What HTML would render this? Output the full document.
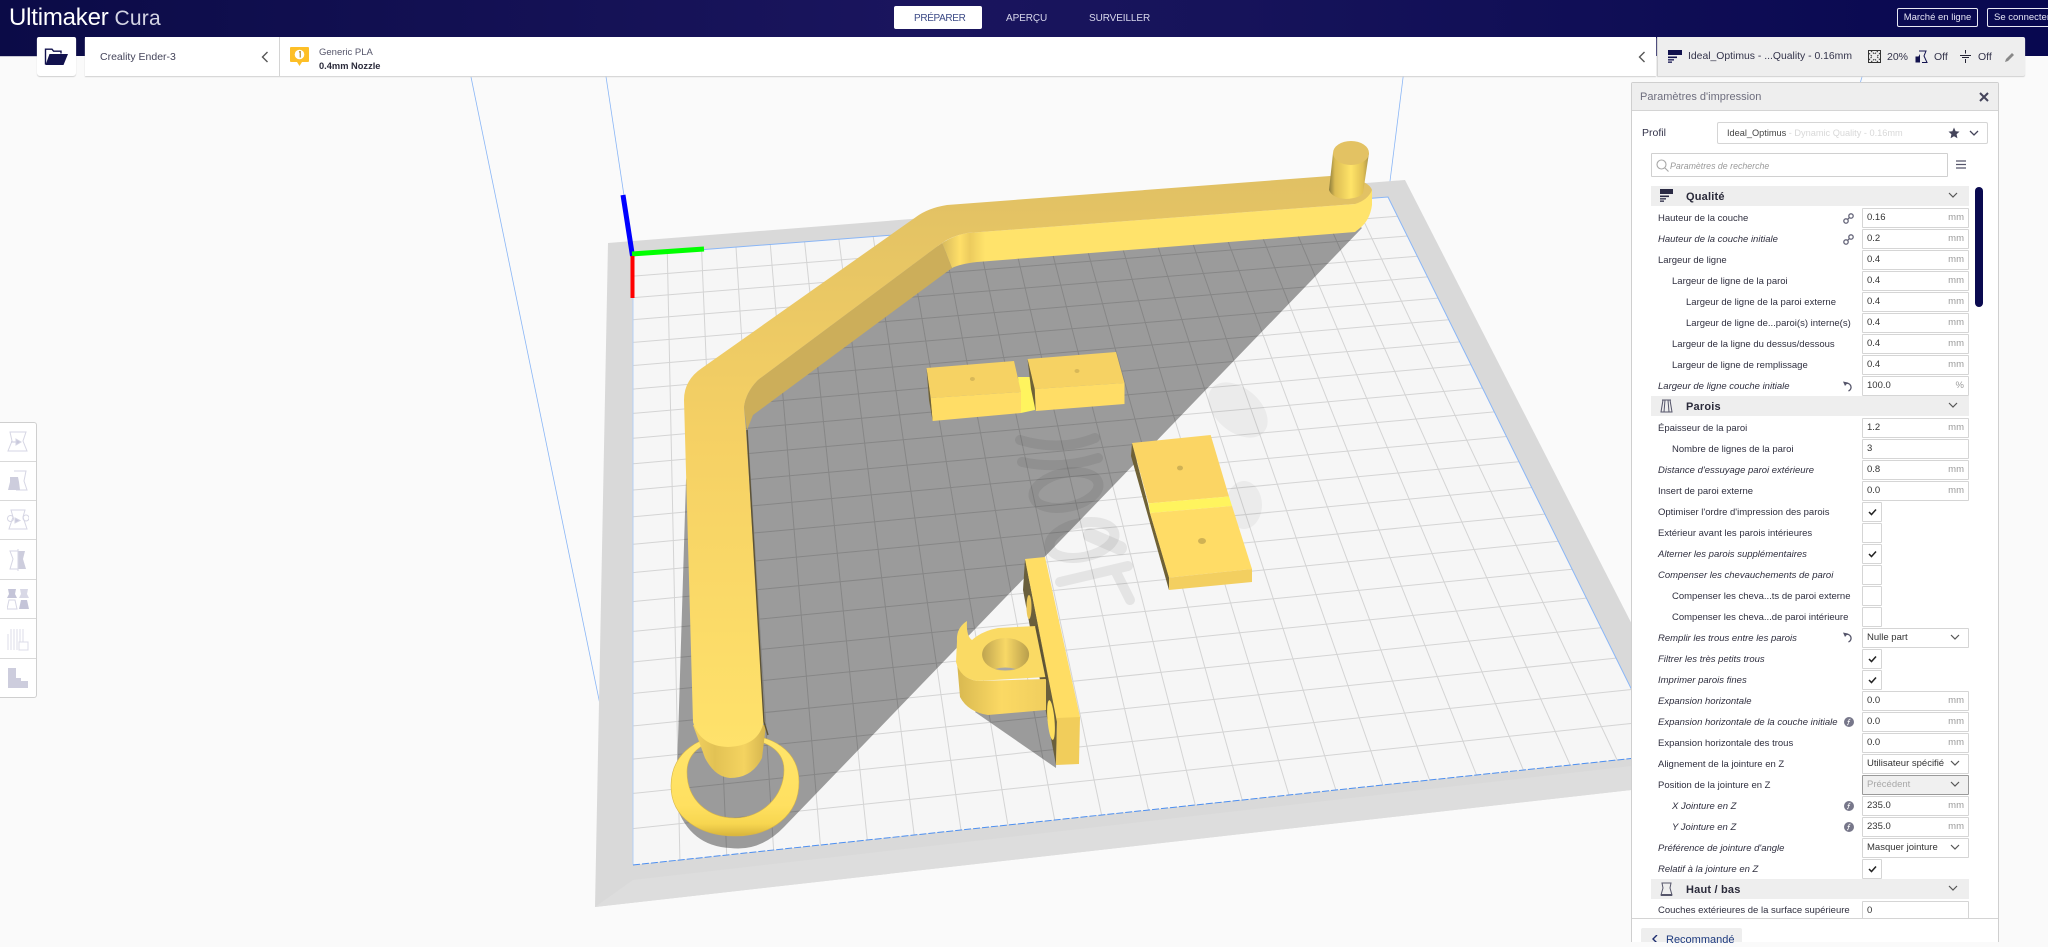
<!DOCTYPE html>
<html lang="fr"><head><meta charset="utf-8"><title>Ultimaker Cura</title>
<style>
html,body{margin:0;padding:0;width:2048px;height:942px;overflow:hidden;background:#fafafa;font-family:"Liberation Sans",sans-serif;color:#2b2b3a}
div,span{box-sizing:border-box}
.a{position:absolute}
.t{position:absolute;white-space:nowrap;line-height:14px;height:14px}
#list{position:absolute;left:0;top:0;width:2048px;height:918px;overflow:hidden}
.l{position:absolute;white-space:nowrap;font-size:9.5px;line-height:14px;color:#2f2f3f;margin-top:1px}
.i{font-style:italic}
.b{position:absolute;left:1862px;width:107px;height:20px;border:1px solid #d5d5d5;background:#fff;border-radius:1px;font-size:9.5px;line-height:18px;padding-left:4px;color:#333;white-space:nowrap}
.b u{position:absolute;right:4px;top:0;text-decoration:none;color:#9a9a9a}
.b svg{position:absolute;left:87px;top:5px}
.c{position:absolute;left:1862px;width:20px;height:20px;border:1px solid #d5d5d5;background:#fff;border-radius:1px}
.c svg{position:absolute;left:5px;top:5px}
.h{position:absolute;left:1651px;width:318px;height:20px;background:#eeeeee}
.h b{position:absolute;left:35px;top:4px;font-size:11px;line-height:14px;color:#2a2a3a;letter-spacing:.2px}
.h svg.ic{position:absolute;left:9px;top:3px}
.h svg.ch{position:absolute;left:297px;top:6px}
.tb{position:absolute;left:0;width:36px;height:39px;border-bottom:1px solid #d9d9d9}
.tb svg{position:absolute;left:7px;top:8px}
</style></head><body>

<svg class="a" style="left:0;top:0" width="2048" height="942" viewBox="0 0 2048 942">
<defs>
<linearGradient id="top" gradientUnits="userSpaceOnUse" x1="0" y1="170" x2="0" y2="750"><stop offset="0" stop-color="#e0c064"/><stop offset=".45" stop-color="#f5d064"/><stop offset="1" stop-color="#ffe26b"/></linearGradient>
<linearGradient id="peg" x1="0" x2="1" y1="0" y2="0"><stop offset="0" stop-color="#8c7c3c"/><stop offset=".15" stop-color="#dcbc54"/><stop offset=".55" stop-color="#ffe468"/><stop offset=".85" stop-color="#e0c054"/><stop offset="1" stop-color="#a8924a"/></linearGradient>
<linearGradient id="cyl" x1="0" x2="1" y1="0" y2="0"><stop offset="0" stop-color="#f2d060"/><stop offset=".3" stop-color="#e2c254"/><stop offset=".7" stop-color="#f4d360"/><stop offset="1" stop-color="#d4b44e"/></linearGradient>
<linearGradient id="ring" x1="0" x2="0" y1="0" y2="1"><stop offset="0" stop-color="#ffe56c"/><stop offset=".7" stop-color="#ffe060"/><stop offset=".88" stop-color="#f7d650"/><stop offset="1" stop-color="#d8b43c"/></linearGradient>
<linearGradient id="hole" x1="0" x2="1" y1="0" y2="0"><stop offset="0" stop-color="#bfa450"/><stop offset=".5" stop-color="#f8d866"/><stop offset="1" stop-color="#b89e4c"/></linearGradient>
<linearGradient id="cv" x1="0" x2="1" y1="0" y2="0"><stop offset="0" stop-color="#d8b850"/><stop offset=".5" stop-color="#fbd964"/><stop offset="1" stop-color="#f0ce5e"/></linearGradient>
<linearGradient id="bend" gradientUnits="userSpaceOnUse" x1="935" y1="0" x2="985" y2="0"><stop offset="0" stop-color="#c8ab58"/><stop offset=".5" stop-color="#ffdf68"/><stop offset=".7" stop-color="#eccb5e"/><stop offset="1" stop-color="#ffe36b"/></linearGradient>
</defs>

<!-- build volume back lines -->
<g stroke="#8ab6f6" stroke-width=".8" fill="none">
<path d="M605 70L633 255"/><path d="M1404 70L1388 197"/><path d="M471 77L633 865"/><path d="M1864 70L1664 755"/>
</g>

<!-- plate -->
<polygon points="608,243 1405,180 1640,640 1640,789 595,907" fill="#d9d9d9"/>
<polygon points="595,907 633,880 1640,765 1640,789" fill="#dddddd"/>
<polygon points="633,255 1388,197 1664,755 633,865" fill="#f6f6f6"/>

<!-- grid -->
<g stroke="#d4d4d4" stroke-width="1" fill="none">
<path d="M633 276.1L1397.5 216.3M633 297.6L1407.3 236M633 319.7L1417.3 256.2M633 342.4L1427.5 276.9M633 365.5L1438 298.1M633 389.1L1448.7 319.7M633 413.4L1459.7 341.9M633 438.3L1470.9 364.7M633 463.8L1482.5 388M633 490L1494.3 411.9M633 516.8L1506.5 436.5M633 544.3L1518.9 461.7M633 572.6L1531.7 487.5M633 601.6L1544.8 514.1M633 631.4L1558.3 541.3M633 662L1572.1 569.3M633 693.5L1586.4 598.1M633 725.9L1601 627.7M633 759.1L1616.1 658.1M633 793.4L1631.6 689.5M633 828.6L1647.6 721.7"/>
<path d="M667.3 252.4L679.9 860M701.6 249.7L726.7 855M736 247.1L773.6 850M770.3 244.5L820.4 845M804.6 241.8L867.3 840M838.9 239.2L914.2 835M873.2 236.5L961 830M907.6 233.9L1007.9 825M941.9 231.3L1054.7 820M976.2 228.6L1101.6 815M1010.5 226L1148.5 810M1044.8 223.4L1195.3 805M1079.2 220.7L1242.2 800M1113.5 218.1L1289 795M1147.8 215.5L1335.9 790M1182.1 212.8L1382.8 785M1216.4 210.2L1429.6 780M1250.8 207.6L1476.5 775M1285.1 204.9L1523.4 770M1319.4 202.3L1570.2 765M1353.7 199.6L1617.1 760"/>
</g>
<!-- plate edges -->
<g fill="none" stroke-width="1">
<path d="M633 255L1388 197L1664 755" stroke="#8ab6f6"/>
<path d="M633 255L633 865" stroke="#b4d0f6"/>
<path d="M633 865L1664 755" stroke="#4d8ff0" stroke-dasharray="7 2"/>
</g>

<!-- faint lettering footprint -->
<g fill="none" stroke="#333" stroke-opacity=".09" stroke-linecap="round">
<path d="M1020 440Q1060 452 1095 438M1022 462Q1060 470 1098 458" stroke-width="10"/>
<ellipse cx="1066" cy="490" rx="33" ry="17" stroke-width="10" transform="rotate(-12 1066 490)"/>
<ellipse cx="1082" cy="540" rx="33" ry="17" stroke-width="10" transform="rotate(-12 1082 540)"/>
<path d="M1060 582L1128 566M1116 572Q1124 588 1130 600" stroke-width="10"/>
<path d="M1090 535L1120 548" stroke-width="14"/>
</g>
<g fill="#444" fill-opacity=".06">
<ellipse cx="1238" cy="410" rx="34" ry="22" transform="rotate(40 1238 410)"/>
<ellipse cx="1244" cy="505" rx="18" ry="24"/>
</g>

<!-- shadow -->
<path d="M1362 228L784 827Q760 852 730 848Q690 846 676 805L686 480L704 400L800 315L950 240L1340 210Z" fill="#000" fill-opacity=".37"/>
<polygon points="975,712 1056,768 1058,700 1000,690" fill="#000" fill-opacity=".37"/>

<!-- ring -->
<path fill-rule="evenodd" d="M671 786C671 752 700 734 735 734C772 734 799 750 799 782C799 815 772 836 735 836C700 836 671 818 671 786ZM687 772C687 800 708 818 735 818C762 818 784 796 784 770C784 748 762 738 735 738C708 738 687 750 687 772Z" fill="url(#ring)" stroke="#d8b648" stroke-width=".6"/>

<!-- arm cylinder end -->
<path d="M693 725L705 758Q715 777 730 778Q752 778 762 758L766 725Z" fill="url(#cyl)"/>

<!-- arm horizontal wall -->
<path d="M942 243Q955 235 967 233L1355 204Q1365 200 1372 190L1372 205Q1370 220 1360 228L1355 232L977 262Q960 264 952 268Z" fill="url(#bend)"/>
<!-- arm diagonal wall -->
<path d="M758 380L942 243L952 268L753 415L747 430L744 407Q746 392 758 380Z" fill="#ccae5a"/>
<!-- arm top surface -->
<path d="M1372 190Q1368 178 1330 176L947 205Q928 208 916 217L702 368Q684 380 684 400L693 722Q700 746 728 747Q760 746 764 720L746 430L744 407Q746 392 758 380L942 243Q952 236 967 233L1355 204Q1368 200 1372 190Z" fill="url(#top)"/>
<path d="M747 430L764 722L768 735" stroke="#5c5236" stroke-width="1.4" fill="none"/>

<!-- peg -->
<path d="M1333 153L1329 190Q1332 198 1346 199Q1360 198 1363 193L1369 153Z" fill="url(#peg)"/>
<ellipse cx="1351" cy="153" rx="18" ry="12" fill="#e3c263"/>

<!-- block A -->
<polygon points="1018,377 1033,377 1035,410 1021,413" fill="#fff45e"/>
<polygon points="926.5,368 1014,361 1021,392 930.6,398" fill="#f6d263"/>
<polygon points="930.6,398 1021,392 1021,413 932.6,421" fill="#ffdd66"/>
<polygon points="926.5,368 930.6,398 932.6,421 929,400" fill="#6f6136"/>
<polygon points="1027.5,359 1116,352 1124.5,383 1034.7,389" fill="#f6d263"/>
<polygon points="1034.7,389 1124.5,383 1124.5,404 1035.7,411" fill="#ffdd66"/>
<polygon points="1027.5,359 1034.7,389 1035.7,411 1031,389" fill="#6f6136"/>
<ellipse cx="972.4" cy="379" rx="2.5" ry="2" fill="#d8b858"/><ellipse cx="1077" cy="371" rx="2.5" ry="2" fill="#d8b858"/>

<!-- block B -->
<polygon points="1132,443 1131,456 1169,590 1169,577 1150,513 1148,504" fill="#6f6136"/>
<polygon points="1132,443 1210.7,435 1229,496.5 1148.5,503.4" fill="#fbd564"/>
<polygon points="1148.5,503.4 1229,496.5 1232,506 1150,513" fill="#fff45e"/>
<polygon points="1150,513 1232,506 1252,569 1169,577.6" fill="#ffdc66"/>
<polygon points="1169,577.6 1252,569 1252,582 1169,590" fill="#f3cf60"/>
<ellipse cx="1180" cy="468" rx="3" ry="2.4" fill="#d0b254"/><ellipse cx="1202" cy="541" rx="4" ry="3" fill="#d0b254"/>

<!-- clip -->
<polygon points="1025,559 1023,590 1056,765 1057,720" fill="#6a5f3c"/>
<polygon points="1025,559 1045,557 1080,717 1057,722" fill="#ffdd64"/>
<polygon points="1057,718 1080,717 1079,764 1056,765" fill="#f1cd5b"/>
<ellipse cx="1029" cy="607" rx="2.5" ry="12" fill="#ecc85a"/>
<ellipse cx="1051" cy="720" rx="3.5" ry="20" fill="#ffe060" transform="rotate(-5 1051 720)"/>
<path d="M957 662L960 697Q968 712 988 715L1046 710L1046 679L977 681Q960 678 957 662Z" fill="url(#cv)"/>
<path d="M967 621Q956 628 957 641L956 662Q960 678 977 681L1046 677L1036 626L998 628Q982 631 972 640Q966 636 967 621Z" fill="#fada64"/>
<path d="M1036 626L1047 680" stroke="#5d5335" stroke-width="2"/>
<ellipse cx="1005.6" cy="654.5" rx="23.5" ry="16.5" fill="url(#hole)"/>
<path d="M995 669Q1005 666 1016 669Q1005 672 995 669Z" fill="#a8a8a8"/>

<!-- axes -->
<line x1="623" y1="195" x2="632.5" y2="256" stroke="#0000ff" stroke-width="5"/>
<line x1="632" y1="254" x2="704" y2="249" stroke="#00ff00" stroke-width="5"/>
<line x1="632.5" y1="256" x2="632.5" y2="298" stroke="#ff0000" stroke-width="4"/>
</svg>

<!-- header -->
<div class="a" style="left:0;top:0;width:2048px;height:56px;background:linear-gradient(90deg,#0b0b47 0%,#1a155e 45%,#16135a 60%,#080850 100%)"></div>
<div class="a" style="left:0;top:56px;width:37px;height:1px;background:#c8c8d4"></div>
<div class="t" style="left:9px;top:5px;height:26px;line-height:26px;font-size:24px;color:#fff;letter-spacing:-.2px">Ultimaker<span style="color:#d4d4e4;font-size:21px;letter-spacing:.2px;margin-left:6px">Cura</span></div>
<div class="a" style="left:894px;top:6px;width:88px;height:23px;background:#fff;border-radius:2px"></div>
<div class="t" style="left:914px;top:12px;font-size:10px;color:#3c4a86;letter-spacing:-.35px">PRÉPARER</div>
<div class="t" style="left:1006px;top:12px;font-size:10px;color:#d8d8ec;letter-spacing:-.1px">APERÇU</div>
<div class="t" style="left:1089px;top:12px;font-size:10px;color:#d8d8ec;letter-spacing:-.1px">SURVEILLER</div>
<div class="a" style="left:1897px;top:8px;width:81px;height:19px;border:1px solid #e8e8f4;border-radius:2px;color:#e4e4f4;font-size:9.5px;line-height:17px;text-align:center;white-space:nowrap">Marché en ligne</div>
<div class="a" style="left:1987px;top:8px;width:70px;height:19px;border:1px solid #e8e8f4;border-radius:2px;color:#e4e4f4;font-size:9.5px;line-height:17px;padding-left:6px;white-space:nowrap">Se connecter</div>

<!-- bar -->
<div class="a" style="left:37px;top:37px;width:39px;height:39px;background:#fff;border-radius:2px 2px 3px 3px;box-shadow:0 1px 1px #d0d0d0"></div>
<svg class="a" style="left:44px;top:47px" width="25" height="19" viewBox="0 0 25 19"><path d="M1.5 17.5V2.2H8L9.6 4.2H17V6.5" fill="none" stroke="#12124e" stroke-width="1.4"/><path d="M5.5 7H24L19.5 18H1.5Z" fill="#12124e"/></svg>
<div class="a" style="left:85px;top:37px;width:1571px;height:39px;background:#fff;box-shadow:0 1px 1px #d0d0d0"></div>
<div class="a" style="left:279px;top:37px;width:1px;height:39px;background:#d4d4d4"></div>
<div class="t" style="left:100px;top:50px;font-size:10.5px;color:#44445a">Creality Ender-3</div>
<svg class="a" style="left:260px;top:51px" width="10" height="12"><path d="M7.5 1L2.5 6L7.5 11" fill="none" stroke="#555" stroke-width="1.4"/></svg>
<svg class="a" style="left:290px;top:47px" width="19" height="20" viewBox="0 0 19 20"><path d="M1 0H18Q19 0 19 1V14Q19 15 18 15H12L9.500 19L7 15H1Q0 15 0 14V1Q0 0 1 0Z" fill="#fdbf27"/><circle cx="9.500" cy="7.500" r="4.800" fill="#fff"/><path d="M9 5L10.200 4.600V10.500" stroke="#a07a10" fill="none" stroke-width="1"/></svg>
<div class="t" style="left:319px;top:46px;font-size:9.5px;color:#55556a">Generic PLA</div>
<div class="t" style="left:319px;top:59px;font-size:9.3px;font-weight:bold;color:#2a2a3a">0.4mm Nozzle</div>
<svg class="a" style="left:1637px;top:51px" width="10" height="12"><path d="M7.500 1L2.500 6L7.500 11" fill="none" stroke="#555" stroke-width="1.400"/></svg>

<!-- print setup bar -->
<div class="a" style="left:1657px;top:37px;width:368px;height:39px;background:#eeeeee;border-left:1px solid #d4d4d4;border-radius:0 2px 2px 0;box-shadow:0 1px 1px #d0d0d0"></div>
<svg class="a" style="left:1668px;top:50px" width="14" height="13"><rect x="0" y="0" width="14" height="5" fill="#12124e"/><rect x="0" y="6.500" width="9" height="1.600" fill="#12124e"/><rect x="0" y="9.200" width="6" height="1.300" fill="#12124e"/><rect x="0" y="11.500" width="4" height="1.300" fill="#12124e"/></svg>
<div class="t" style="left:1688px;top:50px;font-size:10.4px;color:#33334a">Ideal_Optimus - ...Quality - 0.16mm</div>
<svg class="a" style="left:1868px;top:50px" width="13" height="13" viewBox="0 0 13 13"><rect x=".5" y=".5" width="12" height="12" fill="none" stroke="#333" stroke-width="1"/><path d="M3 1L6.500 4L10 1M12 3L9 6.500L12 10M10 12L6.500 9L3 12M1 10L4 6.500L1 3" fill="none" stroke="#333" stroke-width="1" stroke-dasharray="1.500 1"/></svg>
<div class="t" style="left:1887px;top:50px;font-size:10.500px;color:#33334a">20%</div>
<svg class="a" style="left:1915px;top:50px" width="13" height="13" viewBox="0 0 13 13"><path d="M4 1H11L9 6L12 12.500H7" fill="none" stroke="#12124e" stroke-width="1"/><path d="M.5 6.500H3.500L5 4V12.500H.5Z" fill="#12124e"/></svg>
<div class="t" style="left:1934px;top:50px;font-size:10.500px;color:#33334a">Off</div>
<svg class="a" style="left:1960px;top:50px" width="11" height="13" viewBox="0 0 11 13"><path d="M0 5.500H11M2 7.500H9M5.500 0V3.500M5.500 9V13" stroke="#223" stroke-width="1" fill="none"/></svg>
<div class="t" style="left:1978px;top:50px;font-size:10.500px;color:#33334a">Off</div>
<svg class="a" style="left:2005px;top:52px" width="10" height="10" viewBox="0 0 10 10"><path d="M0 10L1 7L7 1L9 3L3 9Z" fill="#888"/></svg>

<!-- left toolbar -->
<div class="a" style="left:0;top:422px;width:37px;height:276px;background:#fff;border:1px solid #cfcfcf;border-left:0;border-radius:0 3px 3px 0">
<div class="tb" style="top:0"><svg width="22" height="22" viewBox="0 0 22 22" fill="none" stroke="#d6d6e4" stroke-width="1"><path d="M3 1H19L16 10L20 20H1L5 10Z"/><path d="M4 11H13" stroke="#c8c8dc"/><path d="M9 8L14 11L9 14Z" fill="#c8c8dc"/></svg></div>
<div class="tb" style="top:39px"><svg width="22" height="22" viewBox="0 0 22 22" fill="none" stroke="#d6d6e4"><path d="M7 1H19L17 11L20 20H9"/><path d="M3 7H11L12 12L13 20H1L3 12Z" fill="#cdcddd" stroke="none"/></svg></div>
<div class="tb" style="top:78px"><svg width="22" height="22" viewBox="0 0 22 22" fill="none" stroke="#d6d6e4"><path d="M4 1H18L16 8L20 20H2L6 8Z"/><circle cx="3.500" cy="9.500" r="3"/><circle cx="19" cy="9" r="3"/><path d="M8 9L13 11.500L8 14Z" fill="#c8c8dc"/></svg></div>
<div class="tb" style="top:118px"><svg width="22" height="22" viewBox="0 0 22 22" fill="none" stroke="#d6d6e4"><path d="M3 2H11V20H3L6 10Z"/><path d="M11 2H18L16 10L19 20H11Z" fill="#cdcddd" stroke="none"/><path d="M11 0V22"/></svg></div>
<div class="tb" style="top:157px"><svg width="22" height="22" viewBox="0 0 22 22" fill="none" stroke="#d6d6e4"><path d="M1 1H9L8 6L10 10H0L2 6Z" fill="#c4c4d8" stroke="none"/><path d="M13 1H21L20 6L22 10H12L14 6Z" fill="#d8d8e6" stroke="none"/><path d="M2 12H8L10 21H0Z"/><path d="M14 12H20L22 21H12Z" fill="#c4c4d8" stroke="none"/></svg></div>
<div class="tb" style="top:197px"><svg width="22" height="24" viewBox="0 0 22 24" fill="none" stroke="#dcdce8"><path d="M1 6V22M4 1V22M7 1V22M10 1V22M13 1V22M16 1V14"/><rect x="12" y="14" width="9" height="8" fill="#fff"/></svg></div>
<div class="tb" style="top:236px;border:0"><svg width="22" height="22" viewBox="0 0 22 22"><path d="M1 1H9V11H14V14H21V21H1Z" fill="#cdcddd"/></svg></div>
</div>

<!-- settings panel -->
<div class="a" style="left:1631px;top:82px;width:368px;height:860px;background:#fff;border:1px solid #cfcfcf;border-bottom:0;border-radius:2px 2px 0 0"></div>
<div class="a" style="left:1632px;top:83px;width:366px;height:28px;background:#eeeeee;border-bottom:1px solid #d4d4d4"></div>
<div class="t" style="left:1640px;top:90px;font-size:11px;color:#6e6e7e">Paramètres d'impression</div>
<svg class="a" style="left:1979px;top:92px" width="10" height="10"><path d="M1 1L9 9M9 1L1 9" stroke="#44445a" stroke-width="2"/></svg>
<div class="t" style="left:1642px;top:126px;font-size:10.500px;color:#33334a">Profil</div>
<div class="a" style="left:1717px;top:122px;width:271px;height:22px;border:1px solid #d5d5d5;border-radius:2px;background:#fff"></div>
<div class="t" style="left:1727px;top:126px;font-size:9.2px;color:#444">Ideal_Optimus <span style="color:#d8d8d8">- Dynamic Quality - 0.16mm</span></div>
<svg class="a" style="left:1948px;top:127px" width="12" height="12" viewBox="0 0 12 12"><path d="M6 .5L7.600 4.200L11.500 4.600L8.600 7.200L9.400 11.200L6 9.200L2.600 11.200L3.400 7.200L.5 4.600L4.400 4.200Z" fill="#44445a"/></svg>
<svg class="a" style="left:1969px;top:130px" width="10" height="7"><path d="M1 1L5 5L9 1" fill="none" stroke="#44445a" stroke-width="1.300"/></svg>
<div class="a" style="left:1651px;top:153px;width:297px;height:24px;border:1px solid #d0d0d0;border-radius:1px;background:#fff"></div>
<svg class="a" style="left:1656px;top:159px" width="13" height="13"><circle cx="5.500" cy="5.500" r="4.500" fill="none" stroke="#a8a8a8" stroke-width="1.100"/><path d="M9 9L12.500 12.500" stroke="#a8a8a8" stroke-width="1.100"/></svg>
<div class="t" style="left:1670px;top:159px;font-size:8.8px;font-style:italic;color:#9a9a9a">Paramètres de recherche</div>
<svg class="a" style="left:1956px;top:160px" width="10" height="9"><path d="M0 1H10M0 4.500H10M0 8H10" stroke="#55556a" stroke-width="1.300"/></svg>

<div class="a" style="left:1975px;top:187px;width:8px;height:120px;background:#0a0a50;border-radius:4px"></div>

<svg width="0" height="0" style="position:absolute"><defs>
<symbol id="chk" viewBox="0 0 9 8"><path d="M1 4L3.500 6.500L8 1.500" fill="none" stroke="#222" stroke-width="1.500"/></symbol>
<symbol id="dn" viewBox="0 0 10 7"><path d="M1 1L5 5L9 1" fill="none" stroke="#555" stroke-width="1.200"/></symbol>
<symbol id="lnk" viewBox="0 0 11 11"><g fill="none" stroke="#66667a" stroke-width="1.300"><circle cx="3" cy="8" r="2.200"/><circle cx="8" cy="3" r="2.200"/><path d="M4.500 6.500L6.500 4.500"/></g></symbol>
<symbol id="rst" viewBox="0 0 11 11"><path d="M2.500 2.500A4 4 0 1 1 5.500 10" fill="none" stroke="#55556a" stroke-width="1.300"/><path d="M0 .5L5 1.500L2 5Z" fill="#55556a"/></symbol>
<symbol id="inf" viewBox="0 0 10 10"><circle cx="5" cy="5" r="5" fill="#77778a"/><path d="M6.500 2.200C5 1.800 4.800 3 4.500 5C4.300 7 4 8 3 7.800M3.500 4.500H6" stroke="#fff" fill="none" stroke-width=".8"/></symbol>
</defs></svg>

<div id="list">
<div class="h" style="top:186px"><svg class="ic" width="14" height="13"><rect width="13" height="5" fill="#2a2a44"/><rect y="6.500" width="9" height="1.600" fill="#2a2a44"/><rect y="9.200" width="6" height="1.300" fill="#2a2a44"/><rect y="11.500" width="4" height="1.300" fill="#2a2a44"/></svg><b>Qualité</b><svg class="ch" width="10" height="7"><use href="#dn"/></svg></div>

<div class="l" style="left:1658px;top:211px">Hauteur de la couche</div><svg class="a" style="left:1843px;top:213px" width="11" height="11"><use href="#lnk"/></svg><div class="b" style="top:208px">0.16<u>mm</u></div>
<div class="l i" style="left:1658px;top:232px">Hauteur de la couche initiale</div><svg class="a" style="left:1843px;top:234px" width="11" height="11"><use href="#lnk"/></svg><div class="b" style="top:229px">0.2<u>mm</u></div>
<div class="l" style="left:1658px;top:253px">Largeur de ligne</div><div class="b" style="top:250px">0.4<u>mm</u></div>
<div class="l" style="left:1672px;top:274px">Largeur de ligne de la paroi</div><div class="b" style="top:271px">0.4<u>mm</u></div>
<div class="l" style="left:1686px;top:295px">Largeur de ligne de la paroi externe</div><div class="b" style="top:292px">0.4<u>mm</u></div>
<div class="l" style="left:1686px;top:316px">Largeur de ligne de...paroi(s) interne(s)</div><div class="b" style="top:313px">0.4<u>mm</u></div>
<div class="l" style="left:1672px;top:337px">Largeur de la ligne du dessus/dessous</div><div class="b" style="top:334px">0.4<u>mm</u></div>
<div class="l" style="left:1672px;top:358px">Largeur de ligne de remplissage</div><div class="b" style="top:355px">0.4<u>mm</u></div>
<div class="l i" style="left:1658px;top:379px">Largeur de ligne couche initiale</div><svg class="a" style="left:1843px;top:381px" width="11" height="11"><use href="#rst"/></svg><div class="b" style="top:376px">100.0<u>%</u></div>

<div class="h" style="top:396px"><svg class="ic" width="13" height="14" viewBox="0 0 13 14"><path d="M2 1H11M3 1L1 13H12L10 1M5 1L4 13M8 1L9 13" fill="none" stroke="#55556a" stroke-width="1"/></svg><b>Parois</b><svg class="ch" width="10" height="7"><use href="#dn"/></svg></div>

<div class="l" style="left:1658px;top:421px">Épaisseur de la paroi</div><div class="b" style="top:418px">1.2<u>mm</u></div>
<div class="l" style="left:1672px;top:442px">Nombre de lignes de la paroi</div><div class="b" style="top:439px">3</div>
<div class="l i" style="left:1658px;top:463px">Distance d'essuyage paroi extérieure</div><div class="b" style="top:460px">0.8<u>mm</u></div>
<div class="l" style="left:1658px;top:484px">Insert de paroi externe</div><div class="b" style="top:481px">0.0<u>mm</u></div>
<div class="l" style="left:1658px;top:505px">Optimiser l'ordre d'impression des parois</div><div class="c" style="top:502px"><svg width="9" height="8"><use href="#chk"/></svg></div>
<div class="l" style="left:1658px;top:526px">Extérieur avant les parois intérieures</div><div class="c" style="top:523px"></div>
<div class="l i" style="left:1658px;top:547px">Alterner les parois supplémentaires</div><div class="c" style="top:544px"><svg width="9" height="8"><use href="#chk"/></svg></div>
<div class="l i" style="left:1658px;top:568px">Compenser les chevauchements de paroi</div><div class="c" style="top:565px"></div>
<div class="l" style="left:1672px;top:589px">Compenser les cheva...ts de paroi externe</div><div class="c" style="top:586px"></div>
<div class="l" style="left:1672px;top:610px">Compenser les cheva...de paroi intérieure</div><div class="c" style="top:607px"></div>
<div class="l i" style="left:1658px;top:631px">Remplir les trous entre les parois</div><svg class="a" style="left:1843px;top:632px" width="11" height="11"><use href="#rst"/></svg><div class="b" style="top:628px">Nulle part<svg width="10" height="7"><use href="#dn"/></svg></div>
<div class="l i" style="left:1658px;top:652px">Filtrer les très petits trous</div><div class="c" style="top:649px"><svg width="9" height="8"><use href="#chk"/></svg></div>
<div class="l i" style="left:1658px;top:673px">Imprimer parois fines</div><div class="c" style="top:670px"><svg width="9" height="8"><use href="#chk"/></svg></div>
<div class="l i" style="left:1658px;top:694px">Expansion horizontale</div><div class="b" style="top:691px">0.0<u>mm</u></div>
<div class="l i" style="left:1658px;top:715px">Expansion horizontale de la couche initiale</div><svg class="a" style="left:1844px;top:717px" width="10" height="10"><use href="#inf"/></svg><div class="b" style="top:712px">0.0<u>mm</u></div>
<div class="l" style="left:1658px;top:736px">Expansion horizontale des trous</div><div class="b" style="top:733px">0.0<u>mm</u></div>
<div class="l" style="left:1658px;top:757px">Alignement de la jointure en Z</div><div class="b" style="top:754px">Utilisateur spécifié<svg width="10" height="7"><use href="#dn"/></svg></div>
<div class="l" style="left:1658px;top:778px">Position de la jointure en Z</div><div class="b" style="top:775px;background:#f0f0f0;border-color:#9a9a9a;color:#a8a8a8">Précédent<svg width="10" height="7"><use href="#dn"/></svg></div>
<div class="l i" style="left:1672px;top:799px">X Jointure en Z</div><svg class="a" style="left:1844px;top:801px" width="10" height="10"><use href="#inf"/></svg><div class="b" style="top:796px">235.0<u>mm</u></div>
<div class="l i" style="left:1672px;top:820px">Y Jointure en Z</div><svg class="a" style="left:1844px;top:822px" width="10" height="10"><use href="#inf"/></svg><div class="b" style="top:817px">235.0<u>mm</u></div>
<div class="l i" style="left:1658px;top:841px">Préférence de jointure d'angle</div><div class="b" style="top:838px">Masquer jointure<svg width="10" height="7"><use href="#dn"/></svg></div>
<div class="l i" style="left:1658px;top:862px">Relatif à la jointure en Z</div><div class="c" style="top:859px"><svg width="9" height="8"><use href="#chk"/></svg></div>

<div class="h" style="top:879px"><svg class="ic" width="13" height="14" viewBox="0 0 13 14"><path d="M2 1H11L10 6L12 13H1L3 6Z" fill="none" stroke="#55556a" stroke-width="1"/><path d="M1 13H12" stroke="#55556a" stroke-width="2"/></svg><b>Haut / bas</b><svg class="ch" width="10" height="7"><use href="#dn"/></svg></div>
<div class="l" style="left:1658px;top:903px">Couches extérieures de la surface supérieure</div><div class="b" style="top:901px">0</div>
</div>

<div class="a" style="left:1632px;top:918px;width:366px;height:1px;background:#d4d4d4"></div>
<div class="a" style="left:1641px;top:928px;width:101px;height:14px;background:#eeeeee;border-radius:2px 2px 0 0"></div>
<svg class="a" style="left:1651px;top:935px" width="8" height="7"><path d="M6 0L2 4L6 8" fill="none" stroke="#1d2c6e" stroke-width="1.400"/></svg>
<div class="t" style="left:1666px;top:933px;font-size:11px;color:#1d3a7e">Recommandé</div>

</body></html>
